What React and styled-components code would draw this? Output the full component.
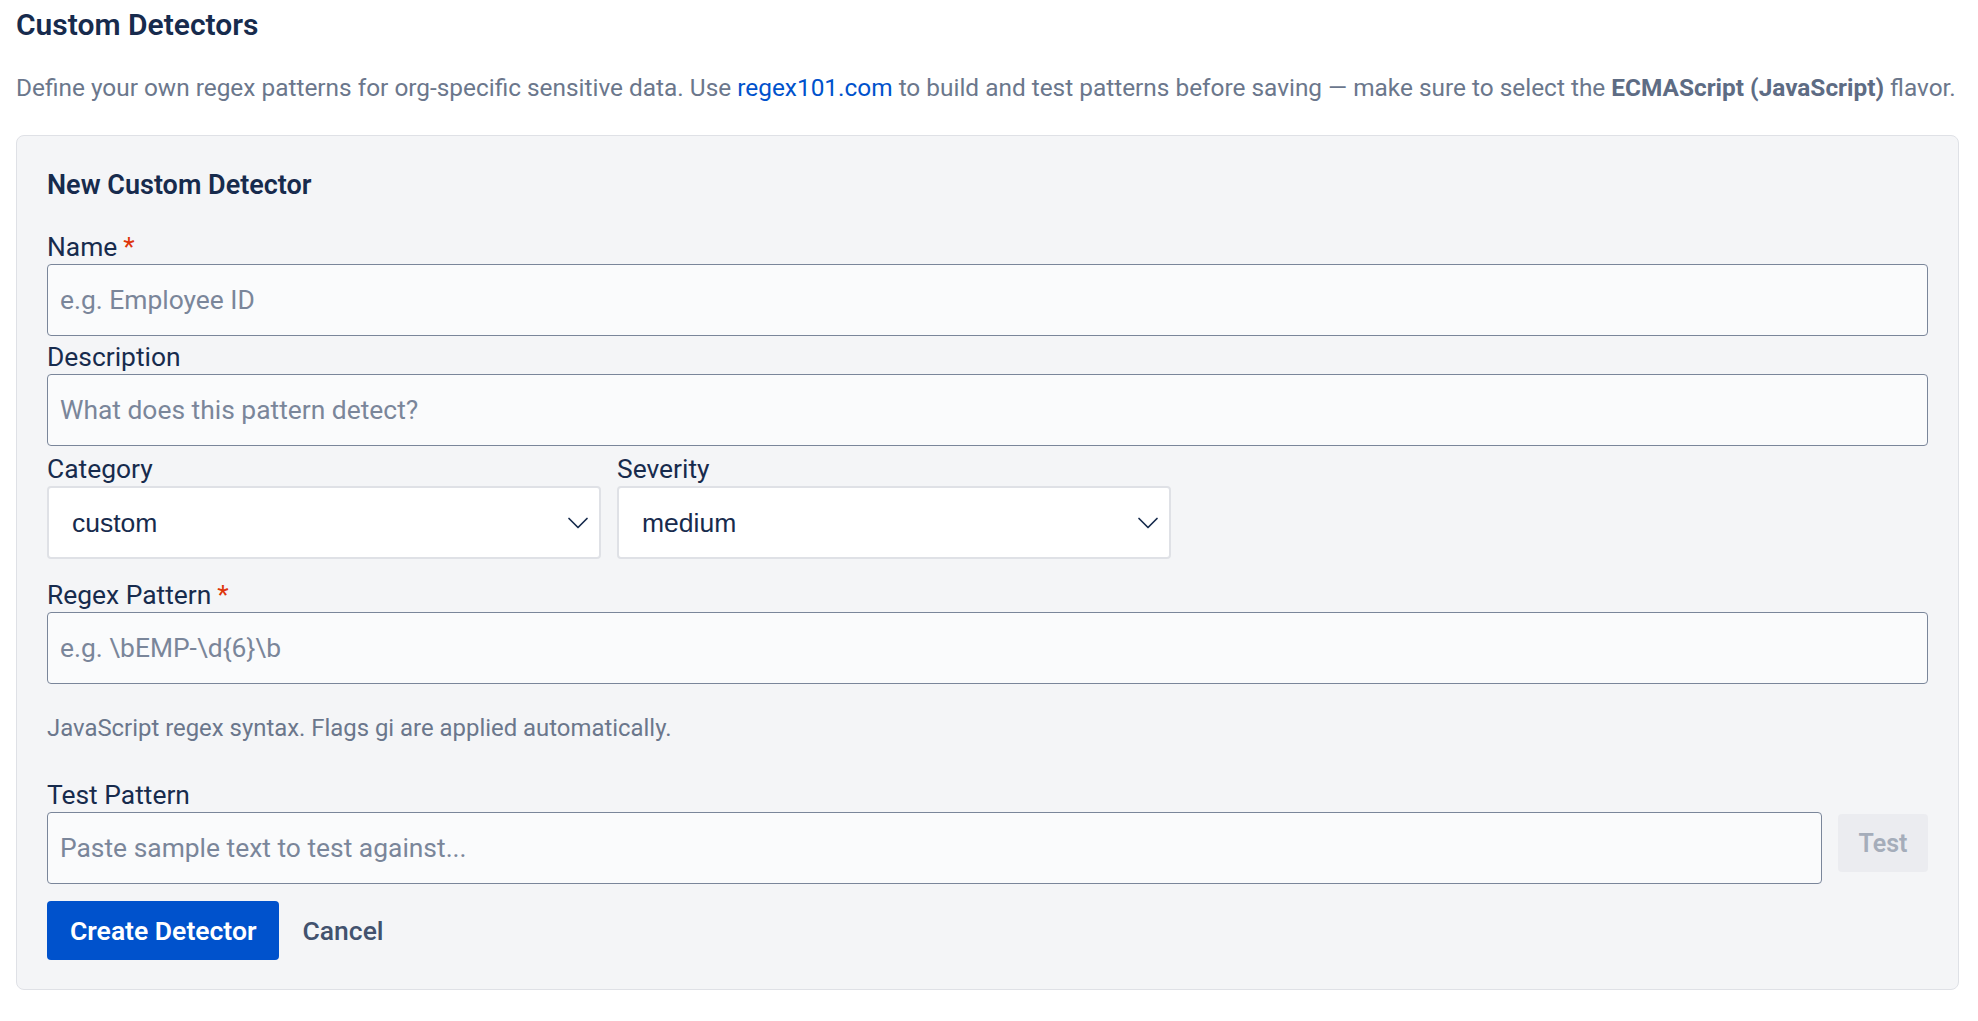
import React from "react";
import styled, { createGlobalStyle } from "styled-components";
import { ChevronDown } from "lucide-react";

const GlobalStyle = createGlobalStyle`
  body {
    margin: 0;
    background: #ffffff;
    font-family: Roboto, "Open Sans", sans-serif;
    color: #172b4d;
  }
`;

const Page = styled.main`
  padding: 7px 19px 31px 16px;
  box-sizing: border-box;
`;

const Title = styled.h2`
  margin: 0;
  font-size: 30px;
  line-height: 36px;
  font-weight: 600;
  color: #172b4d;
`;

const Intro = styled.p`
  margin: 29px 0 31px;
  font-size: 24.4px;
  line-height: 32px;
  color: #6b778c;
  white-space: nowrap;

  a {
    color: #0052cc;
    text-decoration: none;
  }

  strong {
    color: #5e6c84;
    font-weight: 700;
  }
`;

const Card = styled.section`
  background: #f4f5f7;
  border: 1px solid #dfe1e6;
  border-radius: 8px;
  padding: 33px 30px 29px;
`;

const CardTitle = styled.h3`
  margin: 0 0 29px;
  font-size: 27px;
  line-height: 32px;
  font-weight: 600;
  color: #172b4d;
`;

const Field = styled.div`
  display: flex;
  flex-direction: column;
  margin-bottom: ${(p) => p.$gap || 0}px;
`;

const Label = styled.label`
  font-size: 26.4px;
  line-height: 34px;
  color: #172b4d;
`;

const Required = styled.span`
  color: #de350b;
  margin-left: 6px;
`;

const TextInput = styled.input`
  box-sizing: border-box;
  width: 100%;
  height: 72px;
  padding: 0 12px;
  border: 1px solid #7a869a;
  border-radius: 4px;
  background: #fafbfc;
  font-family: Roboto, "Open Sans", sans-serif;
  font-size: 26.4px;
  color: #172b4d;
  outline: none;

  &::placeholder {
    color: #7a869a;
  }
`;

const SelectRow = styled.div`
  display: grid;
  grid-template-columns: repeat(2, 554px);
  column-gap: 16px;
  margin-bottom: 19px;
`;

const SelectBox = styled.div`
  position: relative;

  svg {
    position: absolute;
    right: 5px;
    top: 50%;
    transform: translateY(-50%);
    color: #172b4d;
    pointer-events: none;
  }
`;

const Select = styled.select`
  appearance: none;
  box-sizing: border-box;
  width: 100%;
  height: 73px;
  padding: 0 50px 0 23px;
  border: 2px solid #dfe1e6;
  border-radius: 4px;
  background: #ffffff;
  font-family: "Liberation Sans", Arial, sans-serif;
  font-size: 26.5px;
  color: #172b4d;
  outline: none;
`;

const Hint = styled.p`
  margin: 30px 0 36px;
  font-size: 23.9px;
  line-height: 28px;
  color: #6b778c;
`;

const TestRow = styled.div`
  display: flex;
  align-items: flex-start;
  gap: 16px;
`;

const Button = styled.button`
  box-sizing: border-box;
  border: none;
  border-radius: 4px;
  font-family: Roboto, "Open Sans", sans-serif;
  font-size: 26.5px;
  font-weight: 600;
  cursor: pointer;
`;

const TestButton = styled(Button)`
  flex: 0 0 90px;
  height: 58px;
  margin-top: 2px;
  background: #ebecf0;
  color: #a5adba;
  font-size: 25px;
  cursor: not-allowed;
`;

const Actions = styled.div`
  display: flex;
  align-items: center;
  gap: 23px;
  margin-top: 17px;
`;

const PrimaryButton = styled(Button)`
  height: 59px;
  padding: 0 23px;
  background: #0052cc;
  color: #ffffff;
`;

const LinkButton = styled(Button)`
  padding: 0;
  background: none;
  color: #42526e;
  font-weight: 500;
`;

export default function App() {
  return (
    <>
      <GlobalStyle />
      <Page>
        <Title>Custom Detectors</Title>
        <Intro>
          Define your own regex patterns for org-specific sensitive data. Use{" "}
          <a href="#regex101">regex101.com</a> to build and test patterns before saving — make
          sure to select the <strong>ECMAScript (JavaScript)</strong> flavor.
        </Intro>
        <Card>
          <CardTitle>New Custom Detector</CardTitle>
          <Field $gap={4}>
            <Label>
              Name<Required>*</Required>
            </Label>
            <TextInput placeholder="e.g. Employee ID" />
          </Field>
          <Field $gap={6}>
            <Label>Description</Label>
            <TextInput placeholder="What does this pattern detect?" />
          </Field>
          <SelectRow>
            <Field>
              <Label>Category</Label>
              <SelectBox>
                <Select defaultValue="custom">
                  <option value="custom">custom</option>
                  <option value="pii">pii</option>
                  <option value="credentials">credentials</option>
                </Select>
                <ChevronDown size={36} strokeWidth={1.15} />
              </SelectBox>
            </Field>
            <Field>
              <Label>Severity</Label>
              <SelectBox>
                <Select defaultValue="medium">
                  <option value="low">low</option>
                  <option value="medium">medium</option>
                  <option value="high">high</option>
                </Select>
                <ChevronDown size={36} strokeWidth={1.15} />
              </SelectBox>
            </Field>
          </SelectRow>
          <Field>
            <Label>
              Regex Pattern<Required>*</Required>
            </Label>
            <TextInput placeholder="e.g. \bEMP-\d{6}\b" />
          </Field>
          <Hint>JavaScript regex syntax. Flags gi are applied automatically.</Hint>
          <Field>
            <Label>Test Pattern</Label>
            <TestRow>
              <TextInput placeholder="Paste sample text to test against..." />
              <TestButton disabled>Test</TestButton>
            </TestRow>
          </Field>
          <Actions>
            <PrimaryButton>Create Detector</PrimaryButton>
            <LinkButton>Cancel</LinkButton>
          </Actions>
        </Card>
      </Page>
    </>
  );
}
